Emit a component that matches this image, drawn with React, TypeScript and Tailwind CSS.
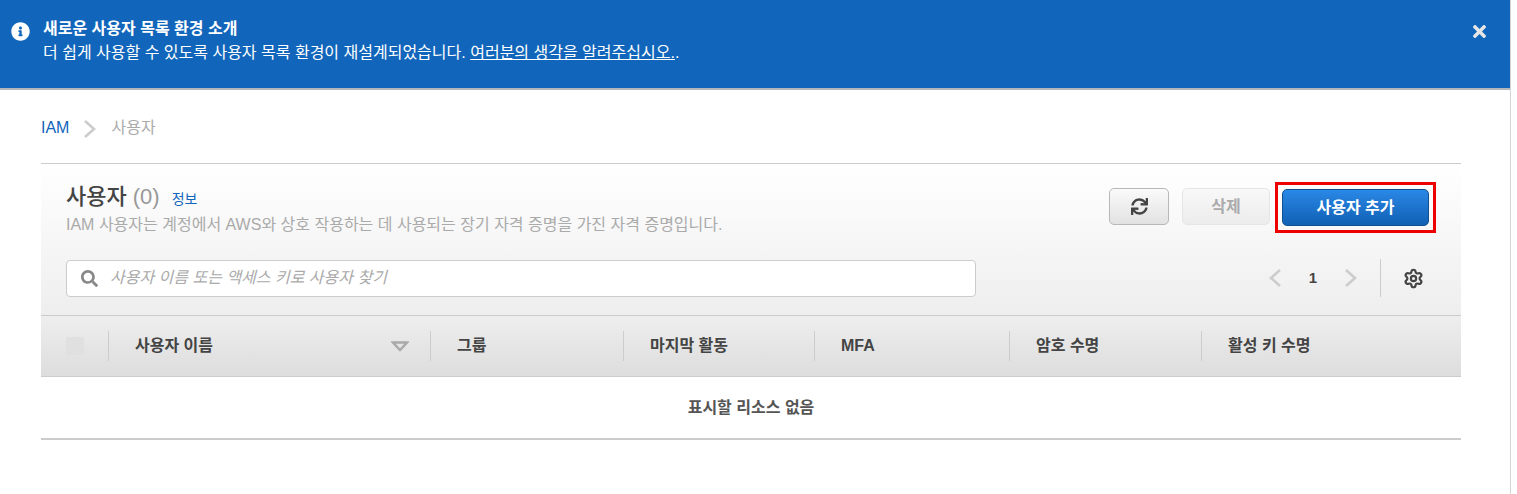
import { FaInfoCircle, FaSearch, FaSync, FaTimes } from "react-icons/fa";
import { Settings } from "lucide-react";

const font = "font-['Liberation_Sans','Noto_Sans_CJK_KR',sans-serif]";

function Chevron({ dir = "right", className = "" }: { dir?: "left" | "right"; className?: string }) {
  return (
    <svg width="14" height="20" viewBox="0 0 14 20" fill="none" className={className}>
      <polyline
        points={dir === "right" ? "2,2 11,10 2,18" : "12,2 3,10 12,18"}
        stroke="#cccccc"
        strokeWidth="2.6"
      />
    </svg>
  );
}

const columns = [
  { label: "그룹", width: "w-[193px]" },
  { label: "마지막 활동", width: "w-[191px]" },
  { label: "MFA", width: "w-[195px]" },
  { label: "암호 수명", width: "w-[192px]" },
  { label: "활성 키 수명", width: "flex-1" },
];

export default function App() {
  return (
    <div className={`${font} h-[494px] w-[1511px] overflow-hidden border-r border-[#d5d5d5] bg-white`}>
      <div className="flex h-[90px] items-start border-b-2 border-[#b4b8bd] bg-[#1166bb] text-white">
        <FaInfoCircle className="mt-[22px] ml-[11px] text-[19px]" />
        <div className="ml-[13px] flex-1 pt-[17px]">
          <div className="text-[16px] leading-[24px] font-bold">새로운 사용자 목록 환경 소개</div>
          <div className="text-[16px] leading-[24px]">
            더 쉽게 사용할 수 있도록 사용자 목록 환경이 재설계되었습니다.{" "}
            <a className="underline">여러분의 생각을 알려주십시오.</a>.
          </div>
        </div>
        <FaTimes className="mt-[22px] mr-[21px] text-[19px] text-[#e6e6e6]" />
      </div>

      <div className="px-[41px] pr-[49px]">
        <div className="flex h-[73px] items-center pt-[2px] text-[16px]">
          <a className="text-[#1166bb]">IAM</a>
          <Chevron className="mx-[14px] mt-[3px]" />
          <span className="text-[#aaaaaa]">사용자</span>
        </div>

        <div className="border-t border-[#cccccc]">
          <div className="h-[151px] bg-gradient-to-b from-white to-[#eeeeee] px-[25px] pt-[18px]">
            <div className="flex justify-between">
              <div>
                <div className="flex items-baseline leading-[30px]">
                  <span className="text-[22px] font-medium text-[#444444]">사용자</span>
                  <span className="ml-[6px] text-[22px] text-[#999999]">(0)</span>
                  <a className="ml-[12px] text-[14px] text-[#1166bb]">정보</a>
                </div>
                <div className="text-[16px] leading-[22px] text-[#aaaaaa]">
                  IAM 사용자는 계정에서 AWS와 상호 작용하는 데 사용되는 장기 자격 증명을 가진 자격 증명입니다.
                </div>
              </div>
              <div className="flex items-start">
                <button className="mt-[6px] flex h-[37px] w-[60px] items-center justify-center rounded-[5px] border border-[#b8b8b8] bg-gradient-to-b from-[#fafafa] to-[#e2e2e2] text-[#444444]">
                  <FaSync className="text-[17px]" />
                </button>
                <button className="mt-[6px] ml-[13px] h-[37px] w-[88px] rounded-[5px] border border-[#e6e6e6] bg-gradient-to-b from-[#f8f8f8] to-[#ececec] text-[16px] font-bold text-[#aaaaaa]">
                  삭제
                </button>
                <div className="ml-[5px] border-[3px] border-[#ee0000] p-[4px]">
                  <button className="block h-[37px] w-[147px] rounded-[5px] border border-[#11508f] bg-gradient-to-b from-[#2a88e6] to-[#1060b4] text-[16px] font-bold text-white">
                    사용자 추가
                  </button>
                </div>
              </div>
            </div>

            <div className="mt-[23px] flex items-center">
              <div className="flex h-[37px] w-[910px] items-center rounded-[4px] border border-[#cccccc] bg-white pl-[14px]">
                <FaSearch className="text-[17px] text-[#888888]" />
                <span className="ml-[12px] text-[16px] text-[#aaaaaa] italic">사용자 이름 또는 액세스 키로 사용자 찾기</span>
              </div>
              <div className="ml-auto flex items-center pr-[12px]">
                <Chevron dir="left" />
                <span className="mx-[27px] text-[15px] font-bold text-[#444444]">1</span>
                <Chevron />
                <div className="mx-[22px] h-[38px] w-px bg-[#cccccc]" />
                <Settings size={21} strokeWidth={2.5} className="text-[#444444]" />
              </div>
            </div>
          </div>

          <div className="flex h-[62px] items-center border-y border-[#cccccc] bg-gradient-to-b from-[#eeeeee] to-[#dddddd] text-[16px] font-bold text-[#444444]">
            <div className="flex h-[30px] w-[68px] items-center border-r border-[#cccccc] pl-[25px]">
              <span className="h-[18px] w-[18px] rounded-[2px] bg-[#e0e0e0]" />
            </div>
            <div className="flex h-[30px] w-[322px] items-center justify-between border-r border-[#cccccc] pr-[21px] pl-[26px]">
              <span>사용자 이름</span>
              <svg width="18" height="11" viewBox="0 0 18 11" fill="none">
                <polygon points="2,1.5 16,1.5 9,9" stroke="#aaaaaa" strokeWidth="2.5" />
              </svg>
            </div>
            {columns.map((col, i) => (
              <div
                key={col.label}
                className={`flex h-[30px] items-center pl-[26px] ${col.width} ${i < 4 ? "border-r border-[#cccccc]" : ""}`}
              >
                {col.label}
              </div>
            ))}
          </div>

          <div className="flex h-[63px] items-center justify-center border-b-2 border-[#cccccc] text-[16px] font-bold text-[#555555]">
            표시할 리소스 없음
          </div>
        </div>
      </div>
    </div>
  );
}
